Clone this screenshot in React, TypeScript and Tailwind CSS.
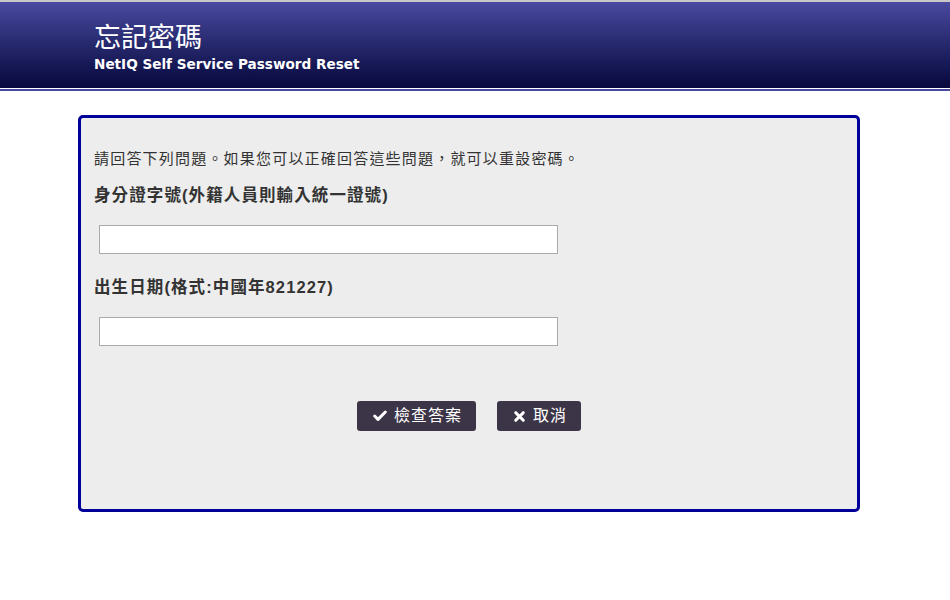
import { Check, X } from 'lucide-react'

const questions = ['身分證字號(外籍人員則輸入統一證號)', '出生日期(格式:中國年821227)']

export default function App() {
  return (
    <div className="min-h-[600px] bg-white font-['Liberation_Sans','Noto_Sans_CJK_TC',sans-serif]">
      <div className="border-t-2 border-[#c8c8c8]">
        <div className="h-[85px] bg-gradient-to-b from-[#4a4aa0] to-[#08083e] pl-[94px] pt-[20px] text-white">
          <div className="text-[27px] leading-[32px]">忘記密碼</div>
          <div className="font-['DejaVu_Sans','Noto_Sans_CJK_TC',sans-serif] text-[13.6px] font-bold leading-[20px]">
            NetIQ Self Service Password Reset
          </div>
        </div>
        <div className="h-[1px] bg-[#0a0a40]" />
        <div className="h-[1px] bg-white" />
        <div className="h-[2px] bg-[#4848a0]" />
      </div>

      <div className="mx-[78px] mt-[24px] h-[397px] w-[782px] rounded-[5px] border-[3px] border-[#000099] bg-[#ededed] px-[13px] pt-[29px] text-[#333]">
        <p className="text-[15px] leading-[24px] tracking-[1.2px]">請回答下列問題。如果您可以正確回答這些問題，就可以重設密碼。</p>
        {questions.map((q, i) => (
          <div key={q} className={i === 0 ? 'mt-[11px]' : 'mt-[20px]'}>
            <div className="text-[16.5px] font-bold leading-[26px] tracking-[1.1px]">{q}</div>
            <input
              type="text"
              className="ml-[5px] mt-[17px] block h-[29px] w-[459px] border border-[#aaa] bg-white"
            />
          </div>
        ))}
        <div className="mt-[55px] flex justify-center gap-[21px]">
          <button className="flex h-[30px] items-center gap-[6px] rounded-[3px] bg-[#3c3548] pl-[15px] pr-[14px] text-[16px] tracking-[1px] text-white">
            <Check size={16} strokeWidth={4.5} />
            檢查答案
          </button>
          <button className="flex h-[30px] items-center gap-[6px] rounded-[3px] bg-[#3c3548] pl-[15px] pr-[14px] text-[16px] tracking-[1px] text-white">
            <X size={15} strokeWidth={5} />
            取消
          </button>
        </div>
      </div>
    </div>
  )
}
